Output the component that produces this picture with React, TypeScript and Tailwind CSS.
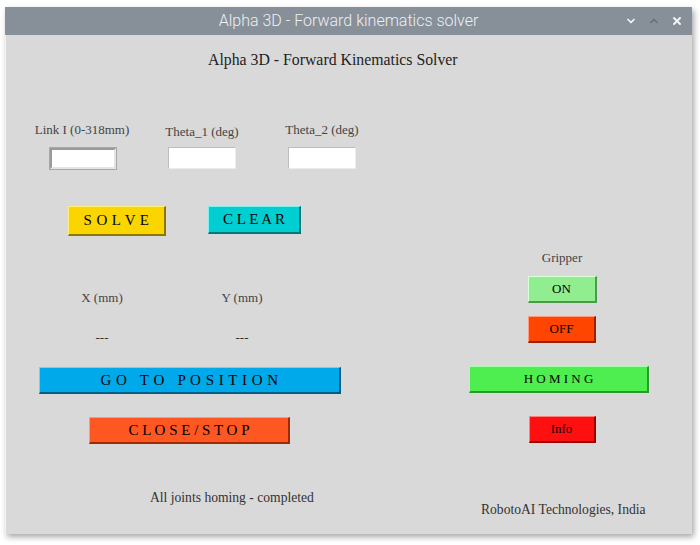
import { ChevronDown, ChevronUp, X } from "lucide-react";

const serif = "font-['Liberation_Serif','Times_New_Roman',serif]";

type BtnProps = {
  label: string;
  className: string;
};

const Btn = ({ label, className }: BtnProps) => (
  <div
    className={`flex items-center justify-center whitespace-pre text-black ${serif} ${className}`}
  >
    {label}
  </div>
);

const Field = ({ label, className, inputClass }: { label: string; className: string; inputClass: string }) => (
  <div className={`flex w-[120px] flex-col items-center ${className}`}>
    <span className="h-[16px] text-[13px] leading-[16px] text-[#444]">{label}</span>
    <div className={`bg-white ${inputClass}`} />
  </div>
);

const App = () => {
  return (
    <div className={`h-[545px] w-[700px] bg-white ${serif}`}>
      <div className="relative left-[5px] top-[7px] flex h-[527px] w-[687px] flex-col bg-[#d9d9d9] shadow-[2px_3px_6px_rgba(0,0,0,0.35)]">
        {/* title bar */}
        <div className="relative flex h-[28px] items-center justify-center bg-[#878f99]">
          <span className="font-['Roboto',sans-serif] text-[16px] font-light text-[#eef0f2]">
            Alpha 3D - Forward kinematics solver
          </span>
          <div className="absolute right-[9px] top-0 flex h-[28px] items-center gap-[11px]">
            <ChevronDown size={12} strokeWidth={3.5} className="text-[#f4f4f4]" />
            <ChevronUp size={12} strokeWidth={3.5} className="text-[#6b7079]" />
            <X size={12} strokeWidth={4} className="text-[#f4f4f4]" />
          </div>
        </div>

        <div className="flex flex-1 flex-col border-l border-[#f2f2f2]">
          <h1 className="ml-[202px] mt-[15px] h-[20px] text-[15.8px] leading-[20px] text-[#222]">
            Alpha 3D - Forward Kinematics Solver
          </h1>

          <div className="flex">
            {/* left column */}
            <div className="flex w-[419px] flex-col">
              <div className="ml-[16px] mt-[52px] flex">
                <Field
                  label="Link I (0-318mm)"
                  className=""
                  inputClass="mt-[10px] ml-[1px] h-[21px] w-[66px] border-2 border-[#9a9a9a] border-b-[#e4e4e4] border-r-[#e4e4e4] outline outline-1 outline-[#a8a8a8]"
                />
                <Field
                  label="Theta_1 (deg)"
                  className="mt-[2px]"
                  inputClass="mt-[7px] h-[22px] w-[68px] border border-[#bdbdbd] border-b-[#ececec] border-r-[#ececec]"
                />
                <Field
                  label="Theta_2 (deg)"
                  className=""
                  inputClass="mt-[9px] h-[22px] w-[68px] border border-[#bdbdbd] border-b-[#ececec] border-r-[#ececec]"
                />
              </div>

              <div className="ml-[62px] mt-[37px] flex items-start gap-[42px]">
                <Btn
                  label="S O L V E"
                  className="h-[30px] w-[98px] border border-[#fff07a] border-b-2 border-r-2 border-b-[#8c7800] border-r-[#8c7800] bg-[#fad500] text-[15px] tracking-[0.4px]"
                />
                <Btn
                  label="C L E A R"
                  className="h-[28px] w-[93px] border border-[#7ff0f2] border-b-2 border-r-2 border-b-[#00787a] border-r-[#00787a] bg-[#00ced1] text-[15px]"
                />
              </div>

              <div className="ml-[46px] mt-[54px] flex gap-[40px] text-[13px] leading-[16px] text-[#444]">
                <span className="w-[100px] text-center">X (mm)</span>
                <span className="w-[100px] text-center">Y (mm)</span>
              </div>
              <div className="ml-[46px] mt-[24px] flex gap-[40px] text-[13px] leading-[16px] text-[#333]">
                <span className="w-[100px] text-center">---</span>
                <span className="w-[100px] text-center">---</span>
              </div>

              <Btn
                label="G O   T O   P O S I T I O N"
                className="ml-[33px] mt-[21px] h-[27px] w-[302px] border border-[#5fd8ff] border-b-2 border-r-2 border-b-[#005e85] border-r-[#005e85] bg-[#00a9e9] text-[15px] tracking-[0.5px]"
              />
              <Btn
                label="C L O S E / S T O P"
                className="ml-[83px] mt-[23px] h-[27px] w-[201px] border border-[#ff9a78] border-b-2 border-r-2 border-b-[#a02a00] border-r-[#a02a00] bg-[#ff5722] text-[15px]"
              />

              <span className="ml-[144px] mt-[46px] h-[16px] text-[13.6px] leading-[16px] text-[#333]">
                All joints homing - completed
              </span>
            </div>

            {/* right column */}
            <div className="flex flex-1 flex-col">
              <div className="ml-[67px] flex w-[140px] flex-col items-center">
                <span className="mt-[180px] h-[16px] text-[13px] leading-[16px] text-[#444]">Gripper</span>
                <Btn
                  label="ON"
                  className="mt-[10px] h-[27px] w-[69px] border border-[#d8ffd8] border-b-2 border-r-2 border-b-[#4a9a4a] border-r-[#4a9a4a] bg-[#90ee90] text-[13px]"
                />
                <Btn
                  label="OFF"
                  className="mt-[13px] h-[27px] w-[68px] border border-[#ff9a7a] border-b-2 border-r-2 border-b-[#9a2200] border-r-[#9a2200] bg-[#ff4500] text-[13px]"
                />
              </div>
              <Btn
                label="H O M I N G"
                className="ml-[44px] mt-[23px] h-[27px] w-[180px] border border-[#a8ffaa] border-b-2 border-r-2 border-b-[#2a9a2c] border-r-[#2a9a2c] bg-[#4fee50] text-[13px]"
              />
              <div className="ml-[67px] flex w-[140px] flex-col items-center">
                <Btn
                  label="Info"
                  className="mt-[23px] h-[27px] w-[67px] border border-[#ff8080] border-b-2 border-r-2 border-b-[#9a0000] border-r-[#9a0000] bg-[#ff1010] text-[13px]"
                />
              </div>
              <span className="ml-[56px] mt-[59px] h-[16px] text-[13.6px] leading-[16px] text-[#333]">
                RobotoAI Technologies, India
              </span>
            </div>
          </div>
        </div>
      </div>
    </div>
  );
};

export default App;
